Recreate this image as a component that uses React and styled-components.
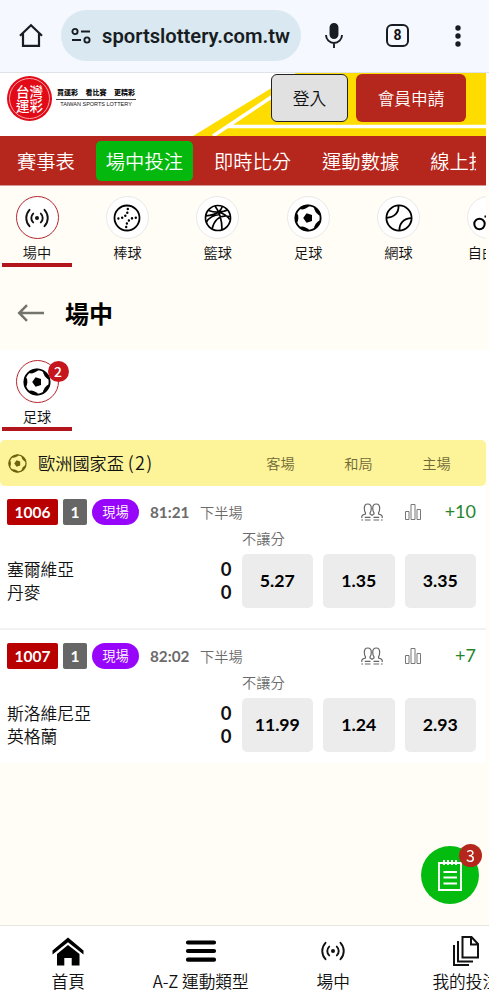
import React from "react";
import styled, { createGlobalStyle } from "styled-components";

const navItems = ["賽事表", "場中投注", "即時比分", "運動數據", "線上投注"];

const matches = [
  {
    id: "1006",
    time: "81:21",
    more: "+10",
    teams: ["塞爾維亞", "丹麥"],
    scores: [0, 0],
    odds: ["5.27", "1.35", "3.35"],
  },
  {
    id: "1007",
    time: "82:02",
    more: "+7",
    teams: ["斯洛維尼亞", "英格蘭"],
    scores: [0, 0],
    odds: ["11.99", "1.24", "2.93"],
  },
];

const LiveIcon = ({ size = 24 }) => (
  <svg width={size} height={size} viewBox="0 0 24 24" fill="none" stroke="#111" strokeWidth="1.9" strokeLinecap="round">
    <circle cx="12" cy="12" r="2" fill="#111" stroke="none" />
    <path d="M8.2 7.600a6 6 0 0 0 0 8.800M15.800 7.600a6 6 0 0 1 0 8.800M4.500 3.800a12 12 0 0 0 0 16.400M19.500 3.800a12 12 0 0 1 0 16.400" />
  </svg>
);

const BaseballIcon = () => (
  <svg width="28" height="28" viewBox="0 0 28 28" fill="none" stroke="#000" strokeWidth="1.8">
    <circle cx="14" cy="14" r="12.5" />
    <path
      d="M14.800 5v.1M14.300 8.600v.1M12.300 11.600v.1M9.200 13.600v.1M5.400 14.400v.1M22.800 13.600v.1M19 14.300v.1M15.900 16.400v.1M13.900 19.400v.1M13.200 23v.1"
      strokeWidth="2.4"
      strokeLinecap="round"
    />
  </svg>
);

const BasketballIcon = () => (
  <svg width="28" height="28" viewBox="0 0 28 28" fill="none" stroke="#000" strokeWidth="1.7">
    <circle cx="14" cy="14" r="12.5" />
    <path d="M11 2q7 9 7 24M18.500 2.300Q17 6 14.700 8Q9.500 11.500 2 11.800M4.500 6.500q6 2 10.200 1.500Q21 7.500 23 6M14.700 8q7 2 11 7.500M26 12.500Q12 9.500 8 25M2.500 18Q6 11.500 16 10.500" />
  </svg>
);

const SoccerIcon = ({ size = 28, color = "#000" }) => (
  <svg width={size} height={size} viewBox="0 0 28 28" fill={color}>
    <circle cx="14" cy="14" r="12.600" fill="none" stroke={color} strokeWidth="1.900" />
    <g transform="rotate(-90 14 14)">
      <path d="M14 9.200l4.700 3.400-1.800 5.400h-5.800l-1.800-5.400z" />
      {[0, 72, 144, 216, 288].map((angle) => (
        <path key={angle} d="M8.200 2.200q2 2.200 5.800 2.200t5.800-2.200Q14-.500 8.200 2.200z" transform={`rotate(${angle} 14 14)`} />
      ))}
    </g>
  </svg>
);

const TennisIcon = () => (
  <svg width="28" height="28" viewBox="0 0 28 28" fill="none" stroke="#000" strokeWidth="1.8">
    <circle cx="14" cy="14" r="12.600" />
    <path d="M13.500 1.500c.5 7-4 12-12 12.300M14.500 26.500c-.5-7 4-12 12-12.300" />
  </svg>
);

const BikeIcon = () => (
  <svg width="32" height="28" viewBox="0 0 32 28" fill="none" stroke="#000" strokeWidth="2">
    <circle cx="6.500" cy="20" r="5.200" />
    <circle cx="25.500" cy="20" r="5.200" />
    <path d="M11.500 12.500h4M13.500 12.500l3 7.500 5-8h-7M20 9h3l2 11" />
  </svg>
);

const PeopleIcon = () => (
  <svg width="22" height="18" viewBox="0 0 22 18" fill="none" stroke="#666" strokeWidth="1.2">
    <path d="M.8 15v-1.500Q.8 12 4.500 11V9.800Q3.300 8 3.300 5.200 3.300 1 6.800 1T10.300 5.200Q10.300 8 9 9.800V11l2 1.200 2-1.200V9.800q-1.300-1.800-1.300-4.600Q11.700 1 15.200 1T18.700 5.200Q18.700 8 17.500 9.800V11q3.700 1 3.700 2.500V15M3.800 14.300h5.700M12.500 14.300h5.700M3.800 17h5.700M12.500 17h5.700M.3 17h1.700M20 17h1.700" />
  </svg>
);

const ChartIcon = () => (
  <svg width="16" height="16" viewBox="0 0 16 16" fill="none" stroke="#777" strokeWidth="1">
    <path d="M.5 7.500h3.500v8H.5zM6 .5h4v15H6zM12 5.500h3.500v10H12z" />
  </svg>
);

const App = () => {
  return (
    <Page>
      <GlobalStyle />
      <BrowserBar>
        <HomeOutline width="24" height="25" viewBox="0 0 24 25">
          <path d="M1 12.800L12 2.300l11 10.500M4 10.500v12.300h16V10.500" />
        </HomeOutline>
        <Address>
          <svg width="21" height="18" viewBox="0 0 21 18" fill="none" stroke="#171d22" strokeWidth="1.900">
            <circle cx="4" cy="4.500" r="2.600" />
            <circle cx="16" cy="13" r="2.600" />
            <path d="M10 4.500h9M1 13h9" />
          </svg>
          sportslottery.com.tw
        </Address>
        <BrowserActions>
          <svg width="18" height="25" viewBox="0 0 18 25" fill="none" stroke="#171d22" strokeWidth="1.900">
            <rect x="5.500" y="1" width="7" height="14" rx="3.500" fill="#171d22" />
            <path d="M1 12a8 8 0 0 0 16 0M9 20v5" />
          </svg>
          <TabCount>8</TabCount>
          <svg width="6" height="22" viewBox="0 0 6 22" fill="#171d22">
            <circle cx="3" cy="3" r="2.700" />
            <circle cx="3" cy="11" r="2.700" />
            <circle cx="3" cy="19" r="2.700" />
          </svg>
        </BrowserActions>
      </BrowserBar>

      <SiteHeader>
        <Banner viewBox="0 0 293 63">
          <path d="M0 63L103 0H293V63Z" fill="#ffdc00" />
          <path d="M20 63L80 23M33 53.500H293" stroke="#fff" strokeWidth="3.600" />
        </Banner>
        <LogoMark>
          <LogoRing>
            <span>台灣</span>
            <span>運彩</span>
          </LogoRing>
        </LogoMark>
        <Slogan>
          <SloganTop>
            <span>買運彩</span>
            <span>看比賽</span>
            <span>更精彩</span>
          </SloganTop>
          <SloganBottom>TAIWAN SPORTS LOTTERY</SloganBottom>
        </Slogan>
        <HeaderButtons>
          <LoginButton>登入</LoginButton>
          <JoinButton>會員申請</JoinButton>
        </HeaderButtons>
      </SiteHeader>

      <MainNav>
        <NavScroll>
          {navItems.map((item) => (
            <NavItem key={item} $active={item === "場中投注"}>
              {item}
            </NavItem>
          ))}
        </NavScroll>
      </MainNav>

      <SportTabs>
        <SportTab $active>
          <SportCircle $active>
            <LiveIcon />
          </SportCircle>
          <span>場中</span>
        </SportTab>
        <SportTab>
          <SportCircle>
            <BaseballIcon />
          </SportCircle>
          <span>棒球</span>
        </SportTab>
        <SportTab>
          <SportCircle>
            <BasketballIcon />
          </SportCircle>
          <span>籃球</span>
        </SportTab>
        <SportTab>
          <SportCircle>
            <SoccerIcon />
          </SportCircle>
          <span>足球</span>
        </SportTab>
        <SportTab>
          <SportCircle>
            <TennisIcon />
          </SportCircle>
          <span>網球</span>
        </SportTab>
        <SportTab>
          <SportCircle>
            <BikeIcon />
          </SportCircle>
          <span>自由車</span>
        </SportTab>
      </SportTabs>

      <TitleRow>
        <svg width="27" height="20" viewBox="0 0 27 20" fill="none" stroke="#74746f" strokeWidth="2.500">
          <path d="M27 10H2M10 2.200L2.200 10 10 17.800" />
        </svg>
        <h1>場中</h1>
      </TitleRow>

      <LiveSports>
        <SportTab $active>
          <SportCircle $active>
            <SoccerIcon />
            <CountBadge>2</CountBadge>
          </SportCircle>
          <span>足球</span>
        </SportTab>
      </LiveSports>

      <League>
        <SoccerIcon size={19} color="#6e6410" />
        <LeagueName>
          歐洲國家盃 <span>(2)</span>
        </LeagueName>
        <Column>客場</Column>
        <Column>和局</Column>
        <Column>主場</Column>
      </League>

      {matches.map((match) => (
        <Match key={match.id}>
          <MatchInfo>
            <Code>{match.id}</Code>
            <Single>1</Single>
            <LivePill>現場</LivePill>
            <Clock>{match.time}</Clock>
            <Period>下半場</Period>
            <MatchLinks>
              <PeopleIcon />
              <ChartIcon />
              <More>{match.more}</More>
            </MatchLinks>
          </MatchInfo>
          <Market>不讓分</Market>
          <MatchBody>
            <Teams>
              {match.teams.map((team, i) => (
                <Team key={team}>
                  {team}
                  <b>{match.scores[i]}</b>
                </Team>
              ))}
            </Teams>
            <Odds>
              {match.odds.map((odd) => (
                <Odd key={odd}>{odd}</Odd>
              ))}
            </Odds>
          </MatchBody>
        </Match>
      ))}

      <BetSlip>
        <svg width="24" height="32" viewBox="0 0 24 32" fill="none" stroke="#fff" strokeWidth="1.900">
          <path d="M1 4h22v27H1zM6 1v5M10 1v5M14 1v5M18 1v5M5.500 13h13.500M5.500 18.500h13.500M5.500 24.500h13.500" />
        </svg>
        <SlipBadge>3</SlipBadge>
      </BetSlip>

      <BottomNav>
        <BottomItem>
          <svg width="32" height="30" viewBox="0 0 32 30">
            <path d="M.5 14.500L16 1.500l15.500 13v4L16 6.200.5 18.500z" />
            <path d="M5 18L16 9l11.500 9v11.500h-7.800V22h-7.400v7.500H5z" />
          </svg>
          <span>首頁</span>
        </BottomItem>
        <BottomItem>
          <svg width="32" height="30" viewBox="0 0 32 30" stroke="#000" strokeWidth="4.200" strokeLinecap="round">
            <path d="M3 6.500h26M3 15h26M3 23.700h26" />
          </svg>
          <span>A-Z 運動類型</span>
        </BottomItem>
        <BottomItem>
          <LiveIcon />
          <span>場中</span>
        </BottomItem>
        <BottomItem>
          <svg width="28" height="30" viewBox="0 0 28 30" fill="none" stroke="#111" strokeWidth="2">
            <path d="M10.500 1h9l6.500 7v13.500H10.500zM19 1v7.500h7M6 5v20.500h15M2 9v20h15" />
          </svg>
          <span>我的投注</span>
        </BottomItem>
      </BottomNav>
    </Page>
  );
};

const GlobalStyle = createGlobalStyle`
  * {
    box-sizing: border-box;
  }
  body {
    margin: 0;
    overflow: hidden;
    background: #fffdf5;
    font-family: "Noto Sans CJK TC", sans-serif;
    font-weight: 350;
    color: #111;
  }
  svg {
    flex: none;
    display: block;
  }
  button {
    font: inherit;
    padding: 0;
  }
`;

const Page = styled.div`
  width: 489px;
  height: 1000px;
  overflow: hidden;
  display: flex;
  flex-direction: column;
`;

const BrowserBar = styled.div`
  height: 73px;
  flex: none;
  display: flex;
  align-items: center;
  padding: 0 28px 1px 19px;
  background: #f5f8fe;
  border-bottom: 1px solid #dfe2e6;
`;

const HomeOutline = styled.svg`
  fill: none;
  stroke: #171d22;
  stroke-width: 2.2;
`;

const Address = styled.div`
  width: 240px;
  flex: none;
  height: 51px;
  margin-left: 18px;
  padding: 1px 0 0 10px;
  display: flex;
  align-items: center;
  gap: 10px;
  border-radius: 26px;
  background: #dae8f1;
  font-family: Roboto, sans-serif;
  font-weight: 600;
  font-size: 20.2px;
  color: #171d22;
`;

const BrowserActions = styled.div`
  flex: 1;
  margin-left: 24px;
  display: flex;
  align-items: center;
`;

const TabCount = styled.div`
  width: 23px;
  height: 23px;
  flex: none;
  margin: 0 46px 0 43px;
  border: 2px solid #171d22;
  border-radius: 6px;
  font: bold 14px/19px Roboto, sans-serif;
  text-align: center;
`;

const SiteHeader = styled.header`
  position: relative;
  width: 486px;
  height: 63px;
  flex: none;
  display: flex;
  align-items: flex-start;
  padding: 1px 20px 0 7px;
  background: #fff;
`;

const Banner = styled.svg`
  position: absolute;
  right: 0;
  top: 0;
  width: 293px;
  height: 63px;
`;

const LogoMark = styled.div`
  width: 45px;
  height: 45px;
  margin-top: 2px;
  padding: 2px;
  border-radius: 50%;
  background: #e20a17;
`;

const LogoRing = styled.div`
  height: 41px;
  display: flex;
  flex-direction: column;
  align-items: center;
  justify-content: center;
  padding-bottom: 2px;
  border: 1px solid #f7a5a8;
  border-radius: 50%;
  color: #fff;
  font-weight: 500;
  font-size: 13.5px;
  line-height: 14px;
`;

const Slogan = styled.div`
  width: 80px;
  margin: 14px 0 0 4px;
  color: #111;
`;

const SloganTop = styled.div`
  height: 12px;
  display: flex;
  justify-content: space-between;
  padding: 0 1px 0 1px;
  border-bottom: 1px solid #444;
  font-weight: 900;
  font-size: 7px;
  line-height: 9px;
`;

const SloganBottom = styled.div`
  padding-top: 1px;
  font: 5.5px/6px "Liberation Sans", sans-serif;
  text-align: center;
  white-space: nowrap;
`;

const HeaderButtons = styled.div`
  position: relative;
  margin-left: auto;
  display: flex;
  gap: 8px;
`;

const LoginButton = styled.button`
  width: 77px;
  height: 48px;
  border: 1px solid #222;
  border-radius: 6px;
  background: #e1e1e1;
  color: #111;
  font-size: 16.7px;
`;

const JoinButton = styled(LoginButton)`
  width: 110px;
  border: none;
  background: #b5261c;
  color: #fff;
`;

const MainNav = styled.nav`
  width: 486px;
  height: 50px;
  flex: none;
  padding: 5px 10px 0 7px;
  background: #b5261c;
  border-bottom: 1px solid #d19a93;
`;

const NavScroll = styled.div`
  display: flex;
  gap: 11px;
  overflow: hidden;
`;

const NavItem = styled.a`
  flex: none;
  height: 40px;
  padding: 0 10px;
  border-radius: 5px;
  background: ${(props) => (props.$active ? "#04b80e" : "transparent")};
  color: #fff;
  font-size: 19.3px;
  line-height: 41px;
`;

const SportTabs = styled.div`
  width: 486px;
  height: 81px;
  flex: none;
  display: flex;
  gap: 20.4px;
  padding: 10px 0 0 2px;
  overflow: hidden;
`;

const SportTab = styled.div`
  width: 70px;
  height: 70.5px;
  flex: none;
  display: flex;
  flex-direction: column;
  align-items: center;
  border-bottom: 4px solid ${(props) => (props.$active ? "#b3151d" : "transparent")};
  font-size: 14.2px;
  line-height: 18px;
  white-space: nowrap;

  span {
    margin-top: 4px;
  }
`;

const SportCircle = styled.div`
  position: relative;
  width: 43px;
  height: 43px;
  flex: none;
  display: flex;
  align-items: center;
  justify-content: center;
  border: 1px solid ${(props) => (props.$active ? "#b3262c" : "#e9e9e9")};
  border-radius: 50%;
  background: #fff;
`;

const CountBadge = styled.div`
  position: absolute;
  top: 0;
  right: -11px;
  width: 21px;
  height: 21px;
  border-radius: 50%;
  background: #c4161c;
  color: #fff;
  font: 500 14px/20px "Noto Sans CJK TC", sans-serif;
  text-align: center;
`;

const TitleRow = styled.div`
  height: 83px;
  flex: none;
  display: flex;
  align-items: center;
  gap: 21px;
  padding: 9px 0 0 17px;

  h1 {
    margin: 0;
    font-size: 24px;
    font-weight: 700;
    line-height: 36px;
    color: #000;
  }
`;

const LiveSports = styled.div`
  height: 90px;
  flex: none;
  padding: 10px 0 0 2px;
  background: #fff;
`;

const League = styled.div`
  width: 486px;
  height: 46px;
  flex: none;
  display: flex;
  align-items: center;
  padding: 0 10.5px 0 8px;
  border-radius: 5px;
  background: #fdf399;
`;

const LeagueName = styled.div`
  flex: 1;
  margin-left: 11px;
  padding-bottom: 2px;
  font-size: 17.2px;

  span {
    letter-spacing: 1.3px;
    font-size: 18px;
  }
`;

const Column = styled.div`
  width: 78px;
  color: #6f6837;
  font-size: 14.2px;
  text-align: center;
`;

const Match = styled.section`
  width: 486px;
  height: 144px;
  flex: none;
  padding: 12px 10px 0 7px;
  background: #fff;
  border-bottom: 2px solid #f2f2f2;

  & + & {
    height: 133px;
    border-bottom: none;
  }
`;

const MatchInfo = styled.div`
  height: 27px;
  display: flex;
  align-items: center;
  white-space: nowrap;
`;

const Code = styled.div`
  width: 51px;
  height: 26px;
  border-radius: 2px;
  background: #b80000;
  color: #fff;
  font: bold 15.5px/26px Lato, sans-serif;
  text-align: center;
`;

const Single = styled(Code)`
  width: 24px;
  margin-left: 5px;
  background: #666;
`;

const LivePill = styled.div`
  width: 47px;
  height: 26px;
  margin-left: 5px;
  border-radius: 13px;
  background: #9705fb;
  color: #fff;
  font-size: 13.3px;
  line-height: 26px;
  text-align: center;
`;

const Clock = styled.div`
  width: 40px;
  margin-left: 11px;
  color: #6b6b6b;
  font: bold 15.3px/24px Lato, sans-serif;
`;

const Period = styled.div`
  margin-left: 10px;
  color: #6b6b6b;
  font-size: 14.2px;
  line-height: 26px;
`;

const MatchLinks = styled.div`
  margin-left: auto;
  display: flex;
  align-items: center;
  gap: 22px;
`;

const More = styled.a`
  width: 33px;
  color: #26852b;
  font: 18px/25px Lato, sans-serif;
  text-align: right;
`;

const Market = styled.div`
  height: 29px;
  padding-left: 235px;
  color: #6b6b6b;
  font-size: 14.2px;
  line-height: 26px;
`;

const MatchBody = styled.div`
  height: 54px;
  display: flex;
  gap: 10px;
`;

const Teams = styled.div`
  flex: 1;
  padding-top: 4px;
`;

const Team = styled.div`
  display: flex;
  justify-content: space-between;
  font-size: 16.8px;
  line-height: 22.5px;

  b {
    font-family: Lato, sans-serif;
    font-size: 18.5px;
  }
`;

const Odds = styled.div`
  display: flex;
  gap: 10px;
`;

const Odd = styled.button`
  width: 71.5px;
  height: 54px;
  padding-bottom: 1px;
  border: none;
  border-radius: 5px;
  background: #ececec;
  color: #000;
  font: bold 17.7px Lato, sans-serif;
`;

const BetSlip = styled.button`
  position: fixed;
  left: 421px;
  top: 846px;
  width: 58px;
  height: 58px;
  display: flex;
  align-items: center;
  justify-content: center;
  border: none;
  border-radius: 50%;
  background: #04bc10;
`;

const SlipBadge = styled.div`
  position: absolute;
  top: -2px;
  right: -3px;
  width: 23px;
  height: 23px;
  border-radius: 50%;
  background: #b5261c;
  color: #fff;
  font: 400 16px/22px "Noto Sans CJK TC", sans-serif;
`;

const BottomNav = styled.nav`
  height: 75px;
  flex: none;
  margin-top: auto;
  display: flex;
  padding-left: 2px;
  background: #fff;
  border-top: 1px solid #e6e5de;
  overflow: hidden;
`;

const BottomItem = styled.a`
  width: 132.5px;
  flex: none;
  display: flex;
  flex-direction: column;
  align-items: center;
  padding-top: 10px;
  font-size: 16.7px;
  line-height: 24px;

  svg {
    height: 30px;
  }
  span {
    margin-top: 3px;
  }
`;

export default App;
